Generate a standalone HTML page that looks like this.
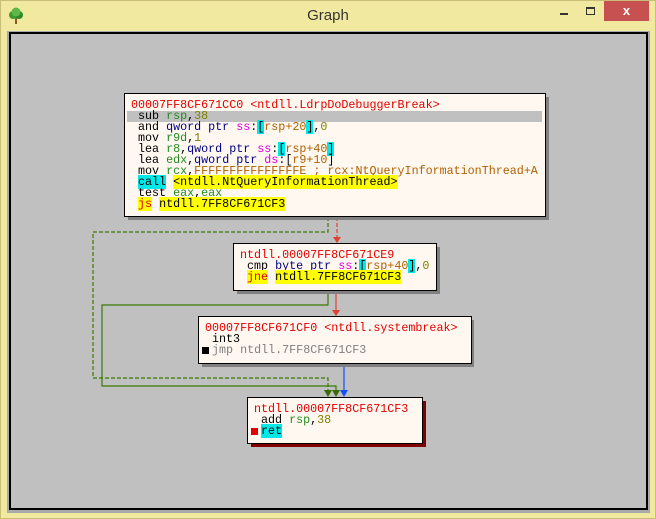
<!DOCTYPE html>
<html><head><style>
*{margin:0;padding:0;box-sizing:border-box}
body{width:656px;height:519px;background:#f2e9a0;position:relative;overflow:hidden;font-family:"Liberation Sans",sans-serif}
.ob{position:absolute;left:0;top:0;width:656px;height:519px;border:1px solid #c9bd7a}
.client{position:absolute;left:7px;top:31px;width:643px;height:482px;border:1px solid #a8a8a8;background:#aaa}
.inner{position:absolute;left:9px;top:32px;width:639px;height:478px;border:2px solid #000;background:#c0c0c0}
.title{position:absolute;left:0;top:7px;width:656px;text-align:center;font-size:15px;color:#333}
.close{position:absolute;left:604px;top:1px;width:45px;height:20px;background:#c75050;color:#fff;text-align:center;font:bold 13px/20px "Liberation Sans",sans-serif}
.blk{position:absolute;background:#fff8f0;border:1px solid #000;font-family:"Liberation Mono",monospace;font-size:11.7px;line-height:11px;white-space:pre;color:#000}
.r{color:#e00000}.g{color:#228b22}.o{color:#808000}.m{color:#e000e0}.b{color:#000080}.br{color:#b06000}.gr{color:#808080}
.cy{background:#00e8e8}.y{background:#ffff00}
.l{position:absolute;left:0;padding-left:6px}
</style></head><body>
<div class="ob"></div>
<svg style="position:absolute;left:7px;top:7px" width="18" height="18" viewBox="0 0 18 18"><rect x="8" y="10" width="2" height="7" fill="#8a5a20"/><circle cx="6" cy="8" r="4" fill="#3a9a30"/><circle cx="12" cy="8" r="4" fill="#2d8a28"/><circle cx="9" cy="5" r="4.5" fill="#5cb848"/></svg>
<div class="title">Graph</div>
<div style="position:absolute;left:560px;top:13px;width:8px;height:2px;background:#333"></div>
<div style="position:absolute;left:586px;top:7px;width:9px;height:8px;border:1px solid #333;border-top-width:2px"></div>
<div class="close">x</div>
<div class="client"></div>
<div class="inner"></div>

<svg style="position:absolute;left:0;top:0" width="656" height="519">
<g fill="none" stroke-width="1.2">
<path d="M328 217V232H93V378H328V392" stroke="#3a7a00" stroke-dasharray="4,2"/>
<path d="M328 290V305H102V386H336V392" stroke="#3a7a00"/>
<path d="M337 217V238" stroke="#e04030" stroke-dasharray="4,2"/>
<path d="M336 290V311" stroke="#e04030"/>
<path d="M344 363V392" stroke="#1050ff"/>
</g>
<path d="M333 237h8l-4 6z" fill="#e04030"/>
<path d="M332 310h8l-4 6z" fill="#e04030"/>
<path d="M324 390h8l-4 7z" fill="#3a6a00"/>
<path d="M332 390h8l-4 7z" fill="#3a6a00"/>
<path d="M340 390h8l-4 7z" fill="#1050ff"/>
<rect x="128" y="97" width="421" height="123" fill="#808080"/>
<rect x="237" y="247" width="203" height="47" fill="#808080"/>
<rect x="202" y="320" width="272" height="47" fill="#808080"/>
<rect x="251" y="401" width="175" height="46" fill="#800000"/>
</svg>

<div class="blk" style="left:124px;top:93px;width:422px;height:124px">
<div style="position:absolute;left:2px;top:17px;width:415px;height:11px;background:#c0c0c0"></div>
<div class="l r" style="top:6px">00007FF8CF671CC0 &lt;ntdll.LdrpDoDebuggerBreak&gt;</div>
<div class="l" style="top:17px"> sub <span class="g">rsp</span>,<span class="o">38</span></div>
<div class="l" style="top:28px"> and <span class="b">qword ptr</span> <span class="m">ss</span>:<span class="cy">[</span><span class="br">rsp+20</span><span class="cy">]</span>,<span class="o">0</span></div>
<div class="l" style="top:39px"> mov <span class="g">r9d</span>,<span class="o">1</span></div>
<div class="l" style="top:50px"> lea <span class="g">r8</span>,<span class="b">qword ptr</span> <span class="m">ss</span>:<span class="cy">[</span><span class="br">rsp+40</span><span class="cy">]</span></div>
<div class="l" style="top:61px"> lea <span class="g">edx</span>,<span class="b">qword ptr</span> <span class="m">ds</span>:[<span class="br">r9+10</span>]</div>
<div class="l" style="top:72px"> mov <span class="g">rcx</span>,<span class="br">FFFFFFFFFFFFFFFE ; rcx:NtQueryInformationThread+A</span></div>
<div class="l" style="top:83px"> <span class="cy">call</span> <span class="y">&lt;ntdll.NtQueryInformationThread&gt;</span></div>
<div class="l" style="top:94px"> test <span class="g">eax</span>,<span class="g">eax</span></div>
<div class="l" style="top:105px"> <span class="y r">js</span> <span class="y">ntdll.7FF8CF671CF3</span></div>
</div>

<div class="blk" style="left:233px;top:243px;width:204px;height:48px">
<div class="l r" style="top:6px">ntdll.00007FF8CF671CE9</div>
<div class="l" style="top:17px"> cmp <span class="b">byte ptr</span> <span class="m">ss</span>:<span class="cy">[</span><span class="br">rsp+40</span><span class="cy">]</span>,<span class="o">0</span></div>
<div class="l" style="top:28px"> <span class="y r">jne</span> <span class="y">ntdll.7FF8CF671CF3</span></div>
</div>

<div class="blk" style="left:198px;top:316px;width:274px;height:48px">
<div class="l r" style="top:6px">00007FF8CF671CF0 &lt;ntdll.systembreak&gt;</div>
<div class="l" style="top:17px"> int3</div>
<div class="l gr" style="top:28px"> jmp ntdll.7FF8CF671CF3</div>
<div style="position:absolute;left:3px;top:30px;width:7px;height:7px;background:#000"></div>
</div>

<div class="blk" style="left:247px;top:397px;width:176px;height:47px">
<div class="l r" style="top:6px">ntdll.00007FF8CF671CF3</div>
<div class="l" style="top:17px"> add <span class="g">rsp</span>,<span class="o">38</span></div>
<div class="l" style="top:28px"> <span class="cy">ret</span></div>
<div style="position:absolute;left:3px;top:30px;width:7px;height:7px;background:#e00000"></div>
</div>
</body></html>
